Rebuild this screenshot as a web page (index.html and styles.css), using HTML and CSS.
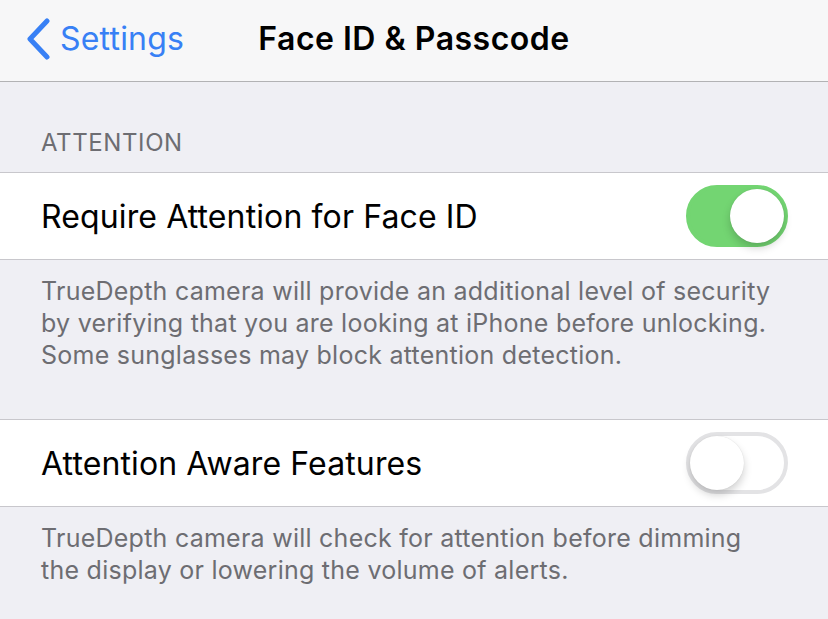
FILE: index.html
```html
<!DOCTYPE HTML>
<html>
<head>
	<meta http-equiv="Content-Type" content="text/html; charset=utf-8">
	<title>Face ID &amp; Passcode</title>
	<link rel="stylesheet" href="styles.css">
</head>
<body>
<div class="navbar">
	<a class="back" href="#">
		<svg class="chevron" width="26" height="42" viewBox="0 0 26 42">
			<path d="M22 3 L5 21 L22 39" fill="none" stroke="#3880f5" stroke-width="5" stroke-linecap="round" stroke-linejoin="round"/>
		</svg>
		<span>Settings</span>
	</a>
	<div class="title">Face ID &amp; Passcode</div>
	<div></div>
</div>

<div class="header">ATTENTION</div>
<div class="cell">
	<div class="label">Require Attention for Face ID</div>
	<div class="switch on"><div class="knob"></div></div>
</div>
<div class="footer">TrueDepth camera will provide an additional level of security<br>by verifying that you are looking at iPhone before unlocking.<br>Some sunglasses may block attention detection.</div>

<div class="cell">
	<div class="label">Attention Aware Features</div>
	<div class="switch"><div class="knob"></div></div>
</div>
<div class="footer">TrueDepth camera will check for attention before dimming<br>the display or lowering the volume of alerts.</div>
</body>
</html>
```

FILE: styles.css
```css
*{
	margin: 0;
	padding: 0;
	box-sizing: border-box;
}
body{
	background: #efeff4;
	font-family: Inter, "Liberation Sans", sans-serif;
	width: 828px;
	height: 619px;
	overflow: hidden;
}

.navbar{
	height: 82px;
	background: #f7f7f8;
	border-bottom: 1px solid #b2b2b4;
	display: grid;
	grid-template-columns: 1fr auto 1fr;
	align-items: center;
}
.back{
	display: flex;
	align-items: center;
	gap: 9px;
	padding-left: 25px;
	text-decoration: none;
	color: #3880f5;
	font-size: 32px;
	letter-spacing: 0.2px;
	padding-bottom: 4px;
}
.title{
	font-size: 32px;
	font-weight: 600;
	letter-spacing: 0.5px;
	color: #000;
	padding-bottom: 4px;
}

.header{
	padding: 45px 41px 13px;
	font-size: 24px;
	line-height: 32px;
	color: #6d6d72;
	letter-spacing: 0.6px;
}

.cell{
	height: 88px;
	background: #fff;
	border-top: 1px solid #c8c7cc;
	border-bottom: 1px solid #c8c7cc;
	display: flex;
	align-items: center;
	justify-content: space-between;
	padding: 0 40px 0 41px;
}
.label{
	font-size: 32px;
	letter-spacing: 0.12px;
	color: #000;
}

.switch{
	width: 102px;
	height: 62px;
	border-radius: 31px;
	border: 4px solid #e3e3e5;
	background: #fff;
	position: relative;
}
.switch .knob{
	position: absolute;
	top: 0;
	left: 0;
	width: 54px;
	height: 54px;
	border-radius: 50%;
	background: #fff;
	box-shadow: 0 5px 8px rgba(0,0,0,0.18), 0 0 1px rgba(0,0,0,0.15);
}
.switch.on{
	background: #73d572;
	border-color: #73d572;
}
.switch.on .knob{
	left: 40px;
}

.footer{
	padding: 15px 41px 48px;
	font-size: 25px;
	line-height: 32px;
	letter-spacing: 0.25px;
	color: #6d6d72;
	white-space: nowrap;
}
```
